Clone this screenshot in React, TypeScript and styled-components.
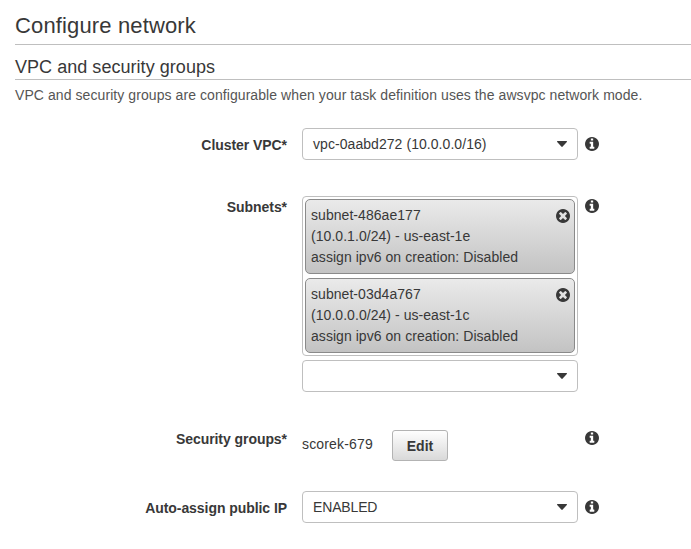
import React from "react";
import styled, { createGlobalStyle } from "styled-components";

const GlobalStyle = createGlobalStyle`
  * { box-sizing: border-box; }
  body {
    margin: 0;
    background: #fff;
    color: #383838;
    font: 14px/21px "Liberation Sans", Arial, sans-serif;
    overflow: hidden;
  }
`;

const Page = styled.main`
  height: 549px;
  padding-left: 15px;
  overflow: hidden;
`;

const Title = styled.h1`
  margin: 0;
  height: 45px;
  padding-top: 10px;
  border-bottom: 1px solid #bfbfbf;
  font-size: 22px;
  font-weight: 400;
  line-height: 31px;
  letter-spacing: 0.14px;
`;

const SectionTitle = styled.h2`
  margin: 0;
  height: 35px;
  padding-top: 10px;
  border-bottom: 1px solid #bfbfbf;
  font-size: 18px;
  font-weight: 400;
  line-height: 24px;
  letter-spacing: 0.04px;
`;

const Description = styled.p`
  margin: 5px 0 22px;
  height: 21px;
  color: #555;
  letter-spacing: 0.075px;
  white-space: nowrap;
`;

const Row = styled.div<{ $height: number }>`
  display: grid;
  grid-template-columns: 272px 276px 14px;
  column-gap: 8px;
  height: ${(p) => p.$height}px;
`;

const Label = styled.label<{ $top: number }>`
  margin-top: ${(p) => p.$top}px;
  font-weight: 700;
  letter-spacing: -0.06px;
  text-align: right;
  white-space: nowrap;
`;

const Field = styled.div`
  margin-left: 7px;
  width: 276px;
`;

const Hint = styled.span<{ $top: number }>`
  display: block;
  padding: ${(p) => p.$top}px 0 0 6px;
  svg { display: block; }
`;

const Select = styled.div<{ $tracking: number }>`
  display: flex;
  align-items: center;
  justify-content: space-between;
  height: 32px;
  padding: 0 10px;
  border: 1px solid #bfbfbf;
  border-radius: 4px;
  background: #fff;
  letter-spacing: ${(p) => p.$tracking}px;
`;

const SelectedList = styled.div`
  display: flex;
  flex-direction: column;
  gap: 4px;
  height: 160px;
  margin-bottom: 4px;
  padding: 2px;
  border: 1px solid #bfbfbf;
  border-radius: 4px;
`;

const Chip = styled.div`
  display: flex;
  justify-content: space-between;
  height: 75px;
  padding: 5px 4px 0 5px;
  border: 1px solid #8a8a8a;
  border-radius: 5px;
  background: linear-gradient(#eaeaea, #c3c3c3);
  letter-spacing: 0.05px;
  svg { margin-top: 4px; }
`;

const Security = styled.div`
  display: flex;
  align-items: flex-start;
`;

const GroupName = styled.span`
  width: 90px;
  padding-top: 4px;
  letter-spacing: 0.16px;
`;

const Button = styled.button`
  width: 56px;
  height: 31px;
  padding: 2px 0 0;
  border: 1px solid #b3b3b3;
  border-radius: 3px;
  background: linear-gradient(#fefefe, #d9d9d9);
  color: #383838;
  font: 700 14px/27px "Liberation Sans", Arial, sans-serif;
`;

const DISC =
  "M1664 896q0 209-103 385.5t-279.5 279.5-385.5 103-385.5-103-279.5-279.5-103-385.5 103-385.5 279.5-279.5 385.5-103 385.5 103 279.5 279.5 103 385.5z";
const INFO =
  "M1152 1376v-160q0-14-9-23t-23-9h-96v-512q0-14-9-23t-23-9h-320q-14 0-23 9t-9 23v160q0 14 9 23t23 9h96v320h-96q-14 0-23 9t-9 23v160q0 14 9 23t23 9h448q14 0 23-9t9-23zm-128-896v-160q0-14-9-23t-23-9h-192q-14 0-23 9t-9 23v160q0 14 9 23t23 9h192q14 0 23-9t9-23z";
const TIMES =
  "M1149 1122q0-26-19-45l-181-181 181-181q19-19 19-45 0-27-19-46l-90-90q-19-19-46-19-26 0-45 19l-181 181-181-181q-19-19-45-19-27 0-46 19l-90 90q-19 19-19 46 0 26 19 45l181 181-181 181q-19 19-19 45 0 27 19 46l90 90q19 19 46 19 26 0 45-19l181-181 181 181q19 19 45 19 27 0 46-19l90-90q19-19 19-46z";

const InfoIcon = () => (
  <svg width="14" height="14" viewBox="128 128 1536 1536" fill="#383838">
    <path fillRule="evenodd" d={DISC + INFO} />
  </svg>
);

const RemoveIcon = () => (
  <svg width="14" height="14" viewBox="128 128 1536 1536">
    <path d={DISC} fill="#383838" />
    {/* The cross sits in the 1792-unit grid around (896, 896). */}
    <path d={TIMES} fill="#e2e2e2" transform="translate(128 0) translate(768 896) scale(1.14) translate(-768 -896)" />
  </svg>
);

const Caret = () => (
  <svg width="10" height="6" viewBox="0 0 10 6" fill="#383838">
    <path d="M.5 0h9q.8.2.3.9L5.7 5.6q-.7.6-1.4 0L.2.9Q-.3.2.5 0z" />
  </svg>
);

const Info = ({ top }: { top: number }) => (
  <Hint $top={top}>
    <InfoIcon />
  </Hint>
);

const Dropdown = ({ value, tracking = 0 }: { value?: string; tracking?: number }) => (
  <Select $tracking={tracking}>
    <span>{value}</span>
    <Caret />
  </Select>
);

const subnets = [
  { id: "subnet-486ae177", zone: "(10.0.1.0/24) - us-east-1e" },
  { id: "subnet-03d4a767", zone: "(10.0.0.0/24) - us-east-1c" },
];

export default function App() {
  return (
    <Page>
      <GlobalStyle />
      <Title>Configure network</Title>
      <SectionTitle>VPC and security groups</SectionTitle>
      <Description>
        VPC and security groups are configurable when your task definition uses the awsvpc network mode.
      </Description>
      <Row $height={68}>
        <Label $top={7}>Cluster VPC*</Label>
        <Field>
          <Dropdown value="vpc-0aabd272 (10.0.0.0/16)" tracking={0.06} />
        </Field>
        <Info top={9} />
      </Row>
      <Row $height={234}>
        <Label $top={1}>Subnets*</Label>
        <Field>
          <SelectedList>
            {subnets.map((s) => (
              <Chip key={s.id}>
                <div>
                  <div>{s.id}</div>
                  <div>{s.zone}</div>
                  <div>assign ipv6 on creation: Disabled</div>
                </div>
                <RemoveIcon />
              </Chip>
            ))}
          </SelectedList>
          <Dropdown />
        </Field>
        <Info top={3} />
      </Row>
      <Row $height={61}>
        <Label $top={-1}>Security groups*</Label>
        <Field>
          <Security>
            <GroupName>scorek-679</GroupName>
            <Button>Edit</Button>
          </Security>
        </Field>
        <Info top={1} />
      </Row>
      <Row $height={32}>
        <Label $top={7}>Auto-assign public IP</Label>
        <Field>
          <Dropdown value="ENABLED" tracking={-0.15} />
        </Field>
        <Info top={9} />
      </Row>
    </Page>
  );
}
